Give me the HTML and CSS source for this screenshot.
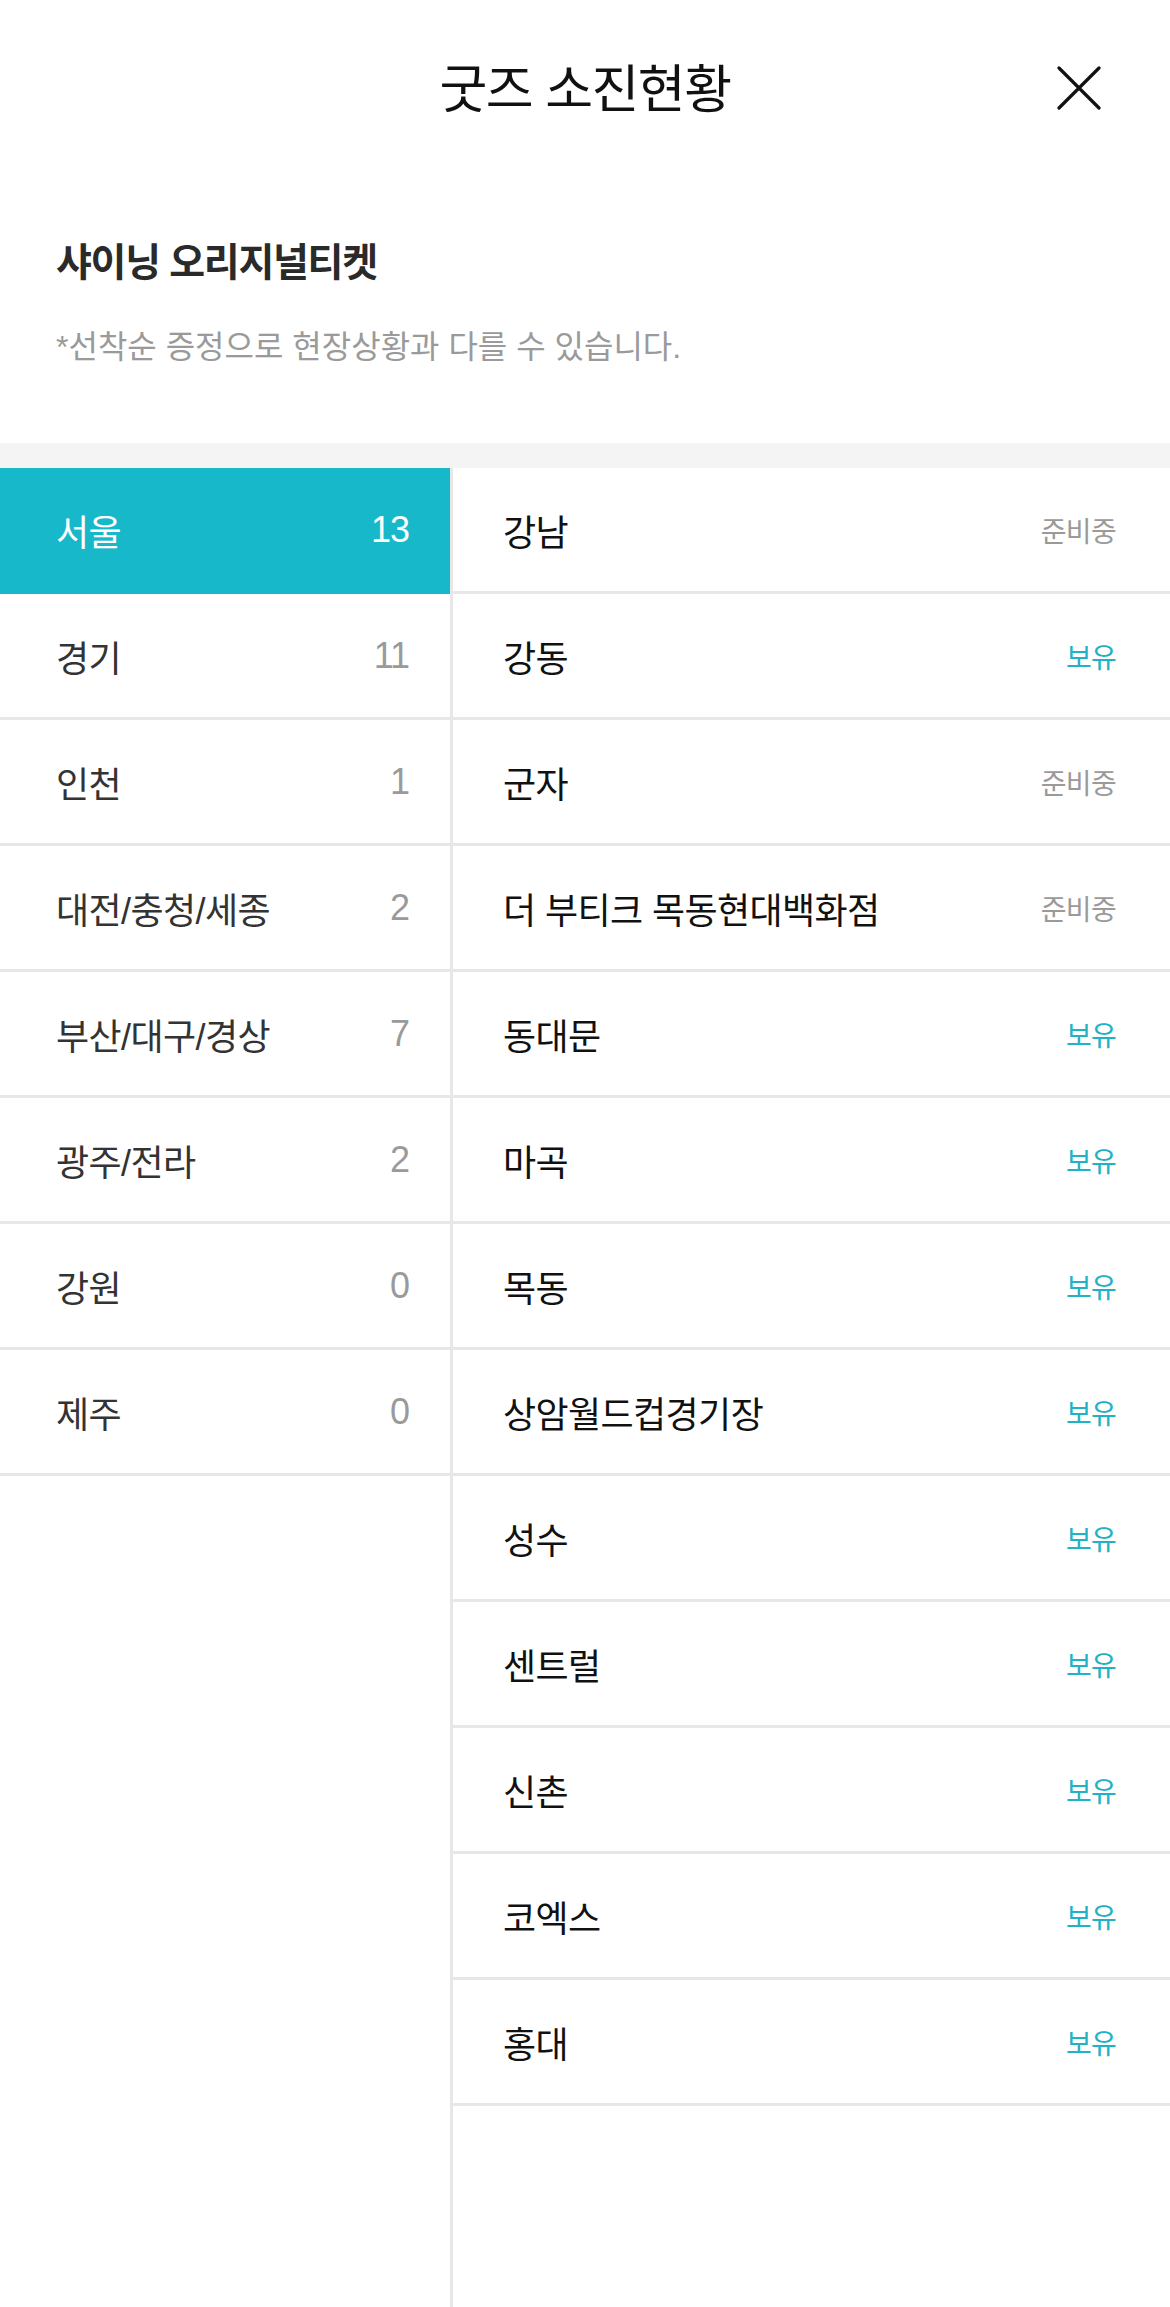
FILE: index.html
```html
<!DOCTYPE html>
<html lang="ko">
<head>
    <meta charset="UTF-8">
    <meta name="viewport" content="width=device-width, initial-scale=1.0">
    <title>굿즈 소진현황</title>
    <link rel="stylesheet" href="styles.css">
</head>
<body>

    <header class="top-bar">
        <span></span>
        <h1 class="top-title">굿즈 소진현황</h1>
        <button class="close-btn" type="button" aria-label="닫기">
            <svg width="44" height="44" viewBox="0 0 44 44">
                <path d="M2 2 L42 42 M42 2 L2 42" stroke="#111" stroke-width="3.2" stroke-linecap="round" fill="none"/>
            </svg>
        </button>
    </header>

    <div class="info">
        <h2 class="goods-name">샤이닝 오리지널티켓</h2>
        <p class="notice">*선착순 증정으로 현장상황과 다를 수 있습니다.</p>
    </div>

    <div class="stock">
        <ul class="region-list">
            <li class="region active"><span>서울</span><span class="count">13</span></li>
            <li class="region"><span>경기</span><span class="count">11</span></li>
            <li class="region"><span>인천</span><span class="count">1</span></li>
            <li class="region"><span>대전/충청/세종</span><span class="count">2</span></li>
            <li class="region"><span>부산/대구/경상</span><span class="count">7</span></li>
            <li class="region"><span>광주/전라</span><span class="count">2</span></li>
            <li class="region"><span>강원</span><span class="count">0</span></li>
            <li class="region"><span>제주</span><span class="count">0</span></li>
        </ul>

        <ul class="theater-list">
            <li class="theater"><span>강남</span><span class="status ready">준비중</span></li>
            <li class="theater"><span>강동</span><span class="status have">보유</span></li>
            <li class="theater"><span>군자</span><span class="status ready">준비중</span></li>
            <li class="theater"><span>더 부티크 목동현대백화점</span><span class="status ready">준비중</span></li>
            <li class="theater"><span>동대문</span><span class="status have">보유</span></li>
            <li class="theater"><span>마곡</span><span class="status have">보유</span></li>
            <li class="theater"><span>목동</span><span class="status have">보유</span></li>
            <li class="theater"><span>상암월드컵경기장</span><span class="status have">보유</span></li>
            <li class="theater"><span>성수</span><span class="status have">보유</span></li>
            <li class="theater"><span>센트럴</span><span class="status have">보유</span></li>
            <li class="theater"><span>신촌</span><span class="status have">보유</span></li>
            <li class="theater"><span>코엑스</span><span class="status have">보유</span></li>
            <li class="theater"><span>홍대</span><span class="status have">보유</span></li>
        </ul>
    </div>

</body>
</html>
```

FILE: styles.css
```css
:root {
    --teal: #17b8ca;
    --line: #e7e7e7;
    --text-dark: #222222;
    --text-gray: #9a9a9a;
}

* {
    box-sizing: border-box;
}

body {
    margin: 0;
    min-height: 100vh;
    display: flex;
    flex-direction: column;
    background: #ffffff;
    font-family: "Liberation Sans", "Noto Sans CJK KR", sans-serif;
    color: var(--text-dark);
}

ul {
    list-style: none;
    margin: 0;
    padding: 0;
}

/* header */
.top-bar {
    height: 176px;
    padding: 0 69px;
    display: grid;
    grid-template-columns: 1fr auto 1fr;
    align-items: center;
}

.top-title {
    margin: 4px 0 0;
    font-size: 52px;
    font-weight: 400;
    letter-spacing: -1.5px;
    line-height: 62px;
    color: #111111;
}

.close-btn {
    justify-self: end;
    width: 44px;
    height: 44px;
    padding: 0;
    border: none;
    background: none;
    cursor: pointer;
}

.close-btn svg {
    display: block;
}

/* goods info */
.info {
    padding: 62px 56px 74px;
}

.goods-name {
    margin: 0;
    font-size: 39px;
    font-weight: 700;
    line-height: 50px;
    letter-spacing: -1.3px;
    color: #2a2a2a;
}

.notice {
    margin: 37px 0 0;
    font-size: 32px;
    line-height: 44px;
    letter-spacing: 0;
    color: var(--text-gray);
}

/* region / theater lists */
.stock {
    flex: 1;
    display: grid;
    grid-template-columns: 450px 1fr;
    border-top: 25px solid #f4f4f4;
}

.region,
.theater {
    height: 126px;
    display: flex;
    align-items: center;
    justify-content: space-between;
    border-bottom: 3px solid var(--line);
    font-size: 36px;
    letter-spacing: -0.6px;
}

.region {
    padding-left: 56px;
    padding-right: 41px;
    color: #333333;
}

.region .count {
    letter-spacing: -1px;
    color: var(--text-gray);
}

.region.active {
    background: var(--teal);
    color: #ffffff;
    border-bottom-color: var(--teal);
}

.region.active .count {
    color: #ffffff;
}

.theater-list {
    border-left: 3px solid var(--line);
}

.theater {
    padding-left: 50px;
    padding-right: 54px;
    color: #111111;
}

.status {
    font-size: 28px;
    letter-spacing: -0.7px;
}

.status.ready {
    color: var(--text-gray);
}

.status.have {
    color: #22b2c6;
}
```
